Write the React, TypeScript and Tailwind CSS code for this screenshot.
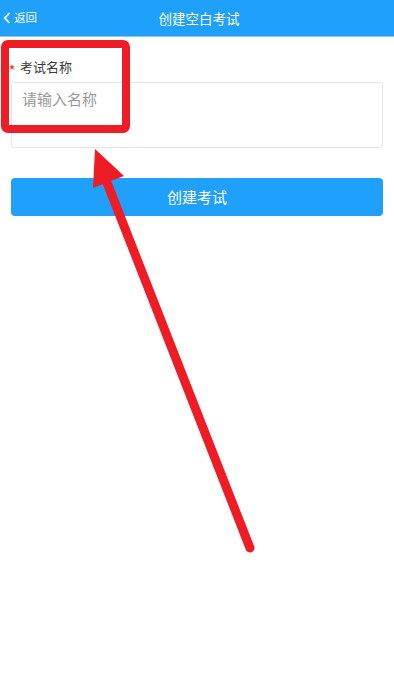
export default function App() {
  return (
    <div
      className="relative w-[394px] h-[684px] bg-white overflow-hidden"
      style={{ fontFamily: '"Noto Sans CJK SC", "Noto Sans", sans-serif' }}
    >
      {/* header */}
      <div className="relative flex items-center h-[37px] bg-[#1fa0fb] border-b border-[#8ccbf7]">
        <div className="flex items-center pl-[3px] text-white">
          <svg width="8" height="12" viewBox="0 0 8 12">
            <path d="M6.5 1 L1.8 6 L6.5 11" fill="none" stroke="#fff" strokeWidth="1.8" />
          </svg>
          <span className="ml-[3px] text-[11.5px] leading-none">返回</span>
        </div>
        <div className="absolute left-0 right-0 top-0 h-[36px] flex items-center justify-center pointer-events-none">
          <span className="text-[13.5px] text-white pl-[4px]">创建空白考试</span>
        </div>
      </div>

      {/* form */}
      <div className="px-[11px]">
        <div className="flex items-center mt-[20px] h-[18px]">
          <svg width="6" height="6" viewBox="0 0 10 10" className="-ml-[2px] mr-[5px] mt-[1px]">
            <polygon points="5,0 6.2,3.6 10,3.6 7,5.9 8.1,9.5 5,7.3 1.9,9.5 3,5.9 0,3.6 3.8,3.6" fill="#e33" />
          </svg>
          <span className="text-[13px] text-[#3a3a3a] leading-none">考试名称</span>
        </div>
        <div className="mt-[7px] h-[66px] border border-[#e6e6e6] rounded-[3px] px-[10px] pt-[3px]">
          <span className="text-[15px] text-[#999]">请输入名称</span>
        </div>
        <button className="mt-[30px] w-full h-[38px] rounded-[4px] bg-[#1fa0fb] text-white text-[15px] flex items-center justify-center">
          创建考试
        </button>
      </div>

      {/* annotation */}
      <svg className="absolute left-0 top-0 pointer-events-none" width="394" height="684" viewBox="0 0 394 684">
        <rect x="5" y="44" width="121" height="85" rx="3" fill="none" stroke="#ee1c25" strokeWidth="8" />
        <line x1="250" y1="548" x2="106" y2="180" stroke="#ee1c25" strokeWidth="9" strokeLinecap="round" />
        <polygon points="95,149 93,188 124,176" fill="#ee1c25" />
      </svg>
    </div>
  );
}
